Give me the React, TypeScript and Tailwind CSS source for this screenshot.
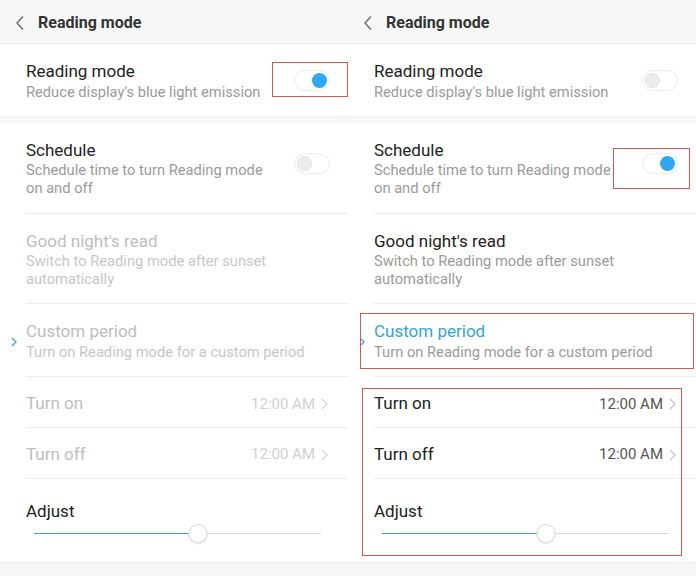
import React from "react";

type PanelProps = { variant: "left" | "right" };

function BackChevron() {
  return (
    <svg width="10" height="16" viewBox="0 0 10 16" className="shrink-0">
      <path d="M8 1.5 L2 8 L8 14.5" fill="none" stroke="#6b6b6b" strokeWidth="1.4" />
    </svg>
  );
}

function RightChevron({ color }: { color: string }) {
  return (
    <svg width="7" height="12" viewBox="0 0 7 12" className="shrink-0">
      <path d="M1 1 L6 6 L1 11" fill="none" stroke={color} strokeWidth="1.2" />
    </svg>
  );
}

function Toggle({ on }: { on: boolean }) {
  return (
    <div className="w-[36px] h-[21px] rounded-full bg-white border border-[#ececec] flex items-center px-[2px] shadow-[inset_0_0_1px_rgba(0,0,0,0.05)]">
      {on ? (
        <div className="ml-auto w-[15px] h-[15px] rounded-full bg-[#2ea7f4]" />
      ) : (
        <div className="w-[15px] h-[15px] rounded-full bg-[#ececec] border border-[#e2e2e2]" />
      )}
    </div>
  );
}

function Divider() {
  return <div className="ml-[26px] h-px bg-[#ececec]" />;
}

function Panel({ variant }: PanelProps) {
  const right = variant === "right";
  const dimTitle = right ? "text-[#222]" : "text-[#bdbdbd]";
  const dimSub = right ? "text-[#9a9a9a]" : "text-[#c6c6c6]";
  const dimValue = right ? "text-[#555]" : "text-[#cfcfcf]";
  const chev = right ? "#c4c4c4" : "#d4d4d4";

  return (
    <div className="relative w-[348px] h-[576px] bg-white flex flex-col overflow-hidden">
      {/* header */}
      <div className="h-[44px] shrink-0 bg-[#f7f7f7] border-b border-[#ebebeb] flex items-center pl-[15px] pt-[2px]">
        <BackChevron />
        <span className="ml-[13px] text-[16px] font-bold text-[#333] leading-none">Reading mode</span>
      </div>

      {/* reading mode */}
      <div className="h-[72px] shrink-0 flex items-center pl-[26px] pr-[18px]">
        <div className="flex-1 pt-[2px]">
          <div className="text-[17px] leading-[22px] text-[#222]">Reading mode</div>
          <div className="text-[14.7px] leading-[20px] text-[#9a9a9a]">Reduce display's blue light emission</div>
        </div>
        <Toggle on={!right} />
      </div>

      <div className="h-[6px] shrink-0 bg-[#f8f8f8] border-y border-[#efefef]" />

      {/* schedule */}
      <div className="h-[91px] shrink-0 flex items-start pl-[26px] pr-[18px] pt-[17px]">
        <div className="flex-1">
          <div className="text-[17px] leading-[22px] text-[#222]">Schedule</div>
          <div className="text-[14.7px] leading-[18px] text-[#9a9a9a] w-[245px]">Schedule time to turn Reading mode on and off</div>
        </div>
        <div className="mt-[14px]">
          <Toggle on={right} />
        </div>
      </div>
      <Divider />

      {/* good night */}
      <div className="h-[89px] shrink-0 pl-[26px] pt-[16px]">
        <div className={`text-[17px] leading-[22px] ${dimTitle}`}>Good night's read</div>
        <div className={`text-[14.7px] leading-[18px] w-[265px] ${dimSub}`}>Switch to Reading mode after sunset automatically</div>
      </div>
      <Divider />

      {/* custom period */}
      <div className="relative h-[72px] shrink-0 pl-[26px] pt-[16px]">
        <div className="absolute left-[11px] top-[33px]">
          <svg width="6" height="10" viewBox="0 0 6 10">
            <path d="M1 1 L5 5 L1 9" fill="none" stroke="#3ba6dc" strokeWidth="1.3" />
          </svg>
        </div>
        <div className={`text-[17px] leading-[22px] ${right ? "text-[#2fa3e6]" : "text-[#bdbdbd]"}`}>Custom period</div>
        <div className={`text-[14.7px] leading-[20px] ${right ? "text-[#9a9a9a]" : "text-[#c6c6c6]"}`}>Turn on Reading mode for a custom period</div>
      </div>
      <Divider />

      {/* turn on */}
      <div className="h-[50px] shrink-0 flex items-center pl-[26px] pr-[20px] pt-[4px]">
        <span className={`flex-1 text-[17px] ${dimTitle}`}>Turn on</span>
        <span className={`text-[15px] mr-[6px] ${dimValue}`}>12:00 AM</span>
        <RightChevron color={chev} />
      </div>
      <Divider />

      {/* turn off */}
      <div className="h-[50px] shrink-0 flex items-center pl-[26px] pr-[20px] pt-[3px]">
        <span className={`flex-1 text-[17px] ${dimTitle}`}>Turn off</span>
        <span className={`text-[15px] mr-[6px] ${dimValue}`}>12:00 AM</span>
        <RightChevron color={chev} />
      </div>
      <Divider />

      {/* adjust */}
      <div className="h-[83px] shrink-0 pl-[26px] pt-[21px]">
        <div className="text-[17px] leading-[22px] text-[#222]">Adjust</div>
        <div className="relative ml-[8px] w-[287px] h-[20px] mt-[1px] flex items-center">
          <div className="h-px w-[57%] bg-[#4a9cc6]" />
          <div className="h-px flex-1 bg-[#d8d8d8]" />
          <div className="absolute left-[57%] -translate-x-1/2 w-[19px] h-[19px] rounded-full bg-white border border-[#dcdcdc] shadow-[0_1px_2px_rgba(0,0,0,0.12)]" />
        </div>
      </div>

      <div className="flex-1 bg-[#f7f7f7] border-t border-[#ebebeb]" />

      {/* annotations */}
      {!right && (
        <div className="absolute left-[272px] top-[62px] w-[76px] h-[35px] border border-[#d9534f]" />
      )}
      {right && (
        <>
          <div className="absolute left-[265px] top-[148px] w-[77px] h-[41px] border border-[#d9534f]" />
          <div className="absolute left-[12px] top-[313px] w-[334px] h-[56px] border border-[#d9534f]" />
          <div className="absolute left-[14px] top-[388px] w-[320px] h-[168px] border border-[#d9534f]" />
        </>
      )}
    </div>
  );
}

export default function App() {
  return (
    <div className="w-[696px] h-[576px] flex font-['Roboto',sans-serif] antialiased">
      <Panel variant="left" />
      <Panel variant="right" />
    </div>
  );
}
